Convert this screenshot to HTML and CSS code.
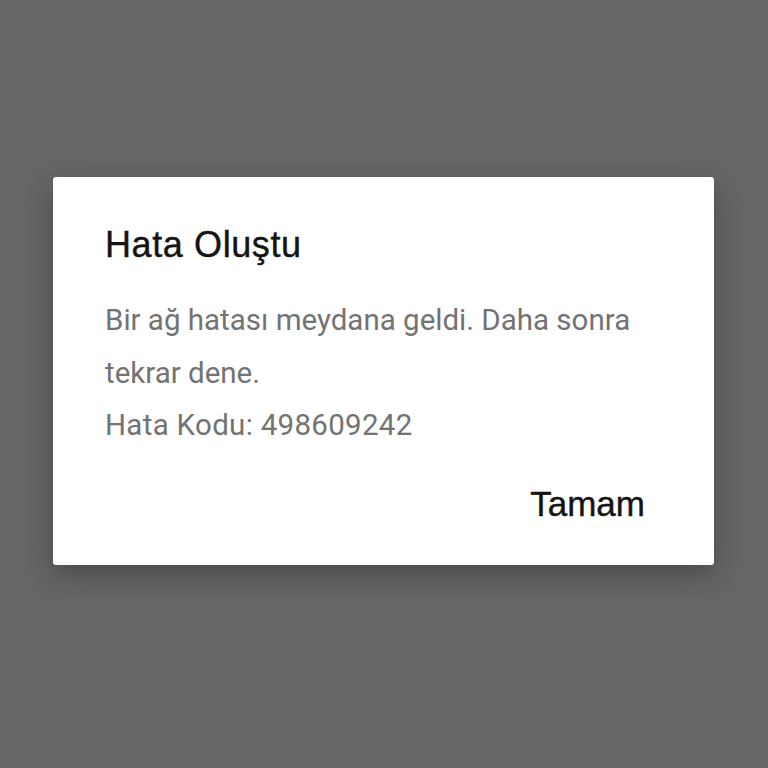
FILE: index.html
```html
<!DOCTYPE html>
<html lang="tr">
<head>
<meta charset="utf-8">
<link rel="stylesheet" href="styles.css">
</head>
<body>
<div class="screen">
  <div class="dialog">
    <h1 class="title">Hata Oluştu</h1>
    <div class="message">
      <p class="line">Bir ağ hatası meydana geldi. Daha sonra tekrar dene.</p>
      <p class="line line-code">Hata Kodu: 498609242</p>
    </div>
    <div class="actions">
      <button class="btn">Tamam</button>
    </div>
  </div>
</div>
</body>
</html>
```
FILE: styles.css
```css
html, body {
  margin: 0;
  padding: 0;
  background: #666666;
}
.screen {
  width: 768px;
  height: 768px;
  box-sizing: border-box;
  padding-top: 177px;
  padding-left: 53px;
}
.dialog {
  width: 661px;
  height: 388px;
  box-sizing: border-box;
  background: #ffffff;
  border-radius: 3px;
  box-shadow: 0 10px 28px rgba(0, 0, 0, 0.28);
  padding: 48px 52px 0 52px;
  display: flex;
  flex-direction: column;
}
.title {
  margin: 0;
  font-family: "Liberation Sans", Arial, sans-serif;
  font-weight: normal;
  font-size: 36px;
  line-height: 40px;
  letter-spacing: 0.6px;
  color: #141414;
  -webkit-text-stroke: 0.4px #141414;
}
.message {
  margin-top: 29px;
  font-family: Roboto, "Noto Sans", sans-serif;
  font-size: 29.5px;
  line-height: 52.5px;
  color: #737373;
}
.line {
  margin: 0;
}
.line-code {
  letter-spacing: 0.3px;
}
.actions {
  margin-top: 32px;
  display: flex;
  justify-content: flex-end;
  padding-right: 17px;
}
.btn {
  border: none;
  background: none;
  padding: 0;
  font-family: "Liberation Sans", Arial, sans-serif;
  font-size: 35px;
  line-height: 40px;
  color: #141414;
  -webkit-text-stroke: 0.4px #141414;
}
```
